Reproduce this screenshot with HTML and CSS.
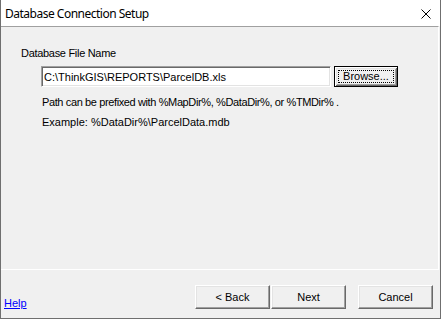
FILE: index.html
```html
<!DOCTYPE html>
<html lang="en">
<head>
  <meta charset="UTF-8">
  <meta name="viewport" content="width=device-width, initial-scale=1.0">
  <title>Database Connection Setup</title>
  <link rel="stylesheet" href="styles.css">
</head>
<body>

<div class="ventana">
  <div class="titulo">
    <span class="titulo-texto">Database Connection Setup</span>
    <svg class="cerrar" width="10" height="10" viewBox="0 0 10 10">
      <path d="M0.5 0.5 L9.5 9.5 M9.5 0.5 L0.5 9.5" stroke="#000" stroke-width="1" fill="none"/>
    </svg>
  </div>

  <div class="panel">
    <div class="etiqueta">Database File Name</div>
    <div class="fila">
      <input type="text" class="archivo" value="C:\ThinkGIS\REPORTS\ParcelDB.xls">
      <button class="boton boton-defecto"><span class="foco">Browse...</span></button>
    </div>
    <div class="nota prefijo">Path can be prefixed with %MapDir%, %DataDir%, or %TMDir% .</div>
    <div class="nota ejemplo">Example: %DataDir%\ParcelData.mdb</div>
  </div>

  <div class="pie">
    <a href="#" class="ayuda">Help</a>
    <div class="botones">
      <button class="boton">&lt; Back</button>
      <button class="boton siguiente">Next</button>
      <button class="boton cancelar">Cancel</button>
    </div>
  </div>
</div>

</body>
</html>
```

FILE: styles.css
```css
body {
  margin: 0;
  padding: 0;
  background-color: #fff;
  font-family: "Liberation Sans", Arial, sans-serif;
  font-size: 11px;
  line-height: 13px;
  color: #000;
}
.ventana {
  width: 441px;
  height: 319px;
  box-sizing: border-box;
  border: 1px solid #6f6f6f;
  border-top: none;
  background-color: #f0f0f0;
  display: flex;
  flex-direction: column;
}
.titulo {
  height: 26px;
  background-color: #fff;
  display: flex;
  align-items: center;
  padding-left: 4px;
  padding-right: 9px;
}
.titulo-texto {
  flex: 1;
  font-family: "Noto Sans", sans-serif;
  font-size: 12px;
  line-height: 16px;
  letter-spacing: -0.5px;
  margin-top: 1px;
}
.cerrar {
  margin-top: 2px;
}
.panel {
  border-top: 1px solid #a0a0a0;
  border-right: 1px solid #fff;
  border-bottom: 1px solid #fff;
  margin-right: 1px;
  padding: 20px 0 0 20px;
  box-sizing: content-box;
  height: 222px;
}
.etiqueta {
  letter-spacing: -0.3px;
}
.fila {
  display: flex;
  margin: 6px 0 0 20px;
  gap: 3px;
}
.archivo {
  width: 290px;
  height: 21px;
  box-sizing: border-box;
  margin: 0;
  padding: 0 2px;
  border: 1px solid;
  border-color: #a0a0a0 #fff #fff #a0a0a0;
  box-shadow: inset 1px 1px #696969, inset -1px -1px #e3e3e3;
  background-color: #fff;
  font-family: "Liberation Sans", Arial, sans-serif;
  font-size: 11px;
  color: #000;
  outline: none;
}
.boton {
  width: 75px;
  height: 24px;
  box-sizing: border-box;
  margin: 0;
  padding: 0;
  border: 1px solid;
  border-color: #fff #696969 #696969 #fff;
  box-shadow: inset -1px -1px #a0a0a0, inset 1px 1px #e3e3e3;
  background-color: #f0f0f0;
  font-family: "Liberation Sans", Arial, sans-serif;
  font-size: 11px;
  color: #000;
  cursor: pointer;
}
.boton-defecto {
  width: 64px;
  height: 21px;
  border: 1px solid #000;
  box-shadow: inset 1px 1px #fff, inset -1px -1px #696969, inset 2px 2px #e3e3e3, inset -2px -2px #a0a0a0;
  padding: 3px;
  display: flex;
}
.foco {
  flex: 1;
  border: 1px dotted #000;
  display: flex;
  align-items: center;
  justify-content: center;
  line-height: 11px;
}
.nota {
  margin: 9px 0 0 21px;
}
.prefijo {
  letter-spacing: -0.38px;
}
.ejemplo {
  margin-top: 7px;
}
.pie {
  flex: 1;
  display: flex;
  padding: 15px 7px 0 3px;
}
.ayuda {
  flex: 1;
  color: #0000ff;
  text-decoration: underline;
  padding-top: 12px;
}
.botones {
  display: flex;
  align-items: flex-start;
}
.siguiente {
  margin-left: 1px;
}
.cancelar {
  margin-left: 12px;
}
```
